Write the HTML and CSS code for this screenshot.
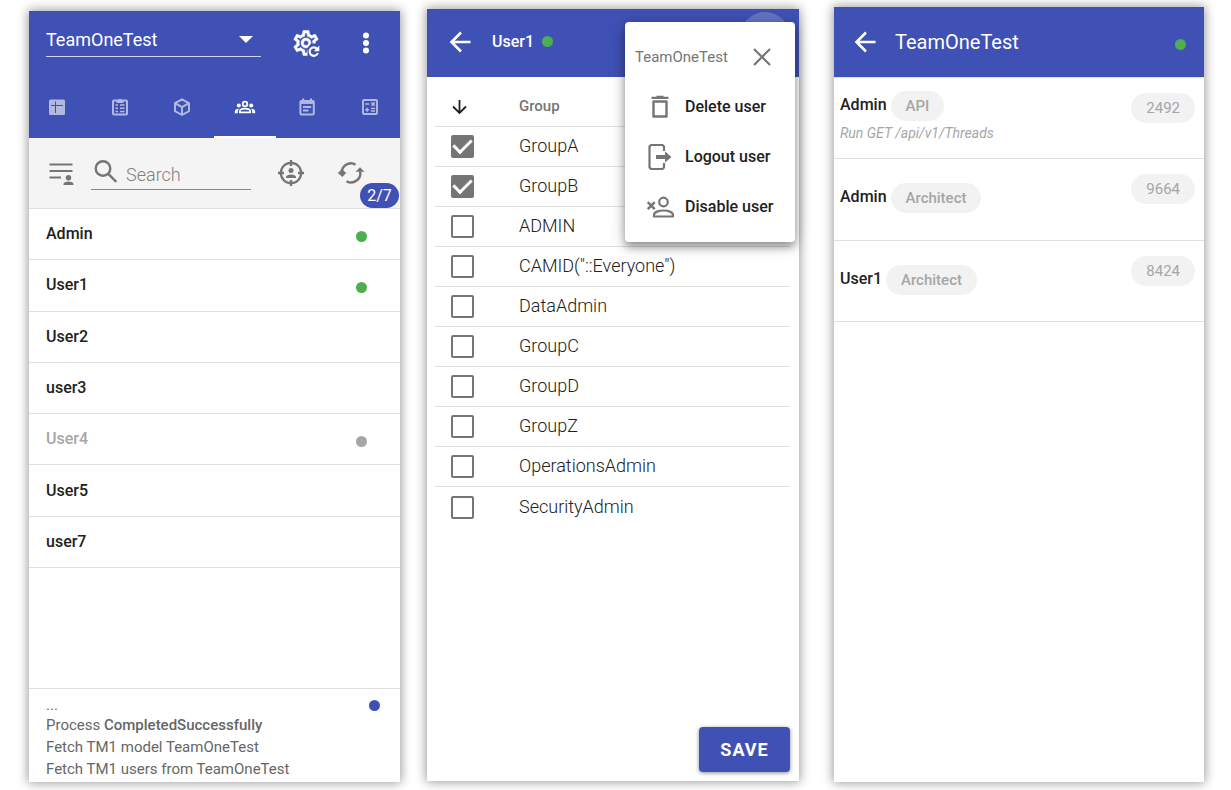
FILE: index.html
```html
<!DOCTYPE html>
<html lang="en">
<head>
<meta charset="utf-8">
<meta name="viewport" content="width=device-width, initial-scale=1">
<title>TeamOneTest</title>
<link rel="stylesheet" href="styles.css">
</head>
<body>
<main class="screens">

  <section class="panel panel-users">
    <header class="bar bar-users">
      <div class="bar-row">
        <div class="select-wrap">
          <select class="model-select" aria-label="Model"><option>TeamOneTest</option></select>
        </div>
        <button class="icon-btn gear-btn" aria-label="Reload settings">
          <svg width="30" height="30" viewBox="0 0 30 30">
            <g transform="scale(1.25)"><path fill="currentColor" stroke="currentColor" stroke-width=".4" fill-rule="evenodd" d="M12,8A4,4 0 0,1 16,12A4,4 0 0,1 12,16A4,4 0 0,1 8,12A4,4 0 0,1 12,8M12,10A2,2 0 0,0 10,12A2,2 0 0,0 12,14A2,2 0 0,0 14,12A2,2 0 0,0 12,10M10,22C9.75,22 9.54,21.82 9.5,21.58L9.13,18.93C8.5,18.68 7.96,18.34 7.44,17.94L4.95,18.95C4.73,19.03 4.46,18.95 4.34,18.73L2.34,15.27C2.21,15.05 2.27,14.78 2.46,14.63L4.57,12.97L4.5,12L4.57,11L2.46,9.37C2.27,9.22 2.21,8.95 2.34,8.73L4.34,5.27C4.46,5.05 4.73,4.96 4.95,5.05L7.44,6.05C7.96,5.66 8.5,5.32 9.13,5.07L9.5,2.42C9.54,2.18 9.75,2 10,2H14C14.25,2 14.46,2.18 14.5,2.42L14.87,5.07C15.5,5.32 16.04,5.66 16.56,6.05L19.05,5.05C19.27,4.96 19.54,5.05 19.66,5.27L21.66,8.73C21.79,8.95 21.73,9.22 21.54,9.37L19.43,11L19.5,12L19.43,13L21.54,14.63L19,19L14,22ZM11.25,4L10.88,6.61C9.68,6.86 8.62,7.5 7.85,8.39L5.44,7.35L4.69,8.65L6.8,10.2C6.4,11.37 6.4,12.64 6.8,13.8L4.68,15.36L5.43,16.66L7.86,15.62C8.63,16.5 9.68,17.14 10.87,17.38L11.24,20H12.76L13.13,17.39C14.32,17.14 15.37,16.5 16.14,15.62L18.57,16.66L19.32,15.36L17.2,13.81C17.6,12.64 17.6,11.37 17.2,10.2L19.31,8.65L18.56,7.35L16.15,8.39C15.38,7.5 14.32,6.86 13.12,6.62L12.75,4Z"/></g>
            <path class="gear-cut" d="M16.500 30V20l3.500-4.500H30V30z"/>
            <path fill="none" stroke="currentColor" stroke-width="2.200" d="M26 20.800A4.200 4.200 0 1 0 26.800 25"/>
            <path fill="currentColor" d="M28.300 17.600v5.600h-5.600z"/>
          </svg>
        </button>
        <button class="icon-btn more-btn" aria-label="More">
          <svg width="24" height="24" viewBox="0 0 24 24" fill="currentColor"><circle cx="12" cy="4.500" r="3"/><circle cx="12" cy="12" r="3"/><circle cx="12" cy="19.500" r="3"/></svg>
        </button>
      </div>
      <nav class="tabs">
        <button class="tab" aria-label="Tables">
          <svg width="20" height="20" viewBox="0 0 20 20"><rect x="2" y="2.500" width="16" height="15.500" rx="1.500" fill="currentColor"/><path class="cut" d="M4 8.500h12M8.500 4.500v11.500"/></svg>
        </button>
        <button class="tab" aria-label="Processes">
          <svg width="20" height="20" viewBox="0 0 20 20" fill="none" stroke="currentColor"><rect x="3" y="3.500" width="14" height="14" rx="1" stroke-width="2"/><path fill="currentColor" stroke="none" d="M6.500 3h1.700a2 2 0 0 1 3.600 0h1.700v3h-7z"/><path stroke-width="1.500" d="M5.500 8h2.500M10 8h4.500M5.500 11.200h2.500M10 11.200h4.500M5.500 14.500h2.500M10 14.500h4.500"/></svg>
        </button>
        <button class="tab" aria-label="Cubes">
          <svg width="20" height="20" viewBox="0 0 20 20" fill="none" stroke="currentColor" stroke-width="2" stroke-linejoin="round"><path d="M10 2.300l7 3.900v7.900l-7 3.900-7-3.900V6.200zM3 6.200l7 4 7-4M10 10.200V18"/></svg>
        </button>
        <button class="tab tab-active" aria-label="Users" aria-current="page">
          <svg width="22" height="20" viewBox="0 0 22 20" fill="none" stroke="currentColor"><circle cx="11" cy="7" r="2.300" stroke-width="1.800"/><path stroke-width="1.700" stroke-linejoin="round" d="M5.800 15.400v-1c0-1.800 2.600-2.700 5.200-2.700s5.200.9 5.200 2.700v1z"/><g fill="currentColor" stroke="none"><circle cx="4.800" cy="8.600" r="2"/><circle cx="17.200" cy="8.600" r="2"/><path d="M.8 16.300v-1.800c0-1.800 1.900-3 4.200-2.800-.8.800-1.200 1.700-1.200 2.800v1.800zM21.200 16.300v-1.800c0-1.800-1.900-3-4.200-2.800.8.800 1.200 1.700 1.200 2.800v1.800z"/></g></svg>
        </button>
        <button class="tab" aria-label="Schedule">
          <svg width="20" height="20" viewBox="0 0 20 20" fill="none" stroke="currentColor"><rect x="3.400" y="4" width="13.400" height="13.500" rx="1" stroke-width="2"/><path stroke-width="2" d="M6.200 1.500v3M14 1.500v3"/><path stroke-width="2.500" d="M3 5.700h14"/><path stroke-width="1.800" d="M6 10h8.200M6 13.500h5.500"/></svg>
        </button>
        <button class="tab" aria-label="Calculations">
          <svg width="20" height="20" viewBox="0 0 20 20" fill="none" stroke="currentColor"><rect x="3" y="3" width="14" height="14" rx="1" stroke-width="1.900"/><path stroke-width="1.500" d="M5.200 7h4M5.200 12.700h4M7.200 10.700v4M11 11.600h4M11 14h4M11.500 5.400l3.200 3.200M14.700 5.400l-3.200 3.200"/></svg>
        </button>
      </nav>
    </header>

    <div class="toolbar">
      <button class="icon-btn list-btn" aria-label="User list">
        <svg width="26" height="26" viewBox="0 0 26 26"><path fill="none" stroke="currentColor" stroke-width="2.200" d="M1.500 4.500h23M1.500 11h23M1.500 17.500h11.500"/><circle cx="20.500" cy="17.800" r="2.700" fill="currentColor"/><path fill="currentColor" d="M15.500 25v-1c0-1.800 2.400-2.600 5-2.600s5 .8 5 2.600v1z"/></svg>
      </button>
      <label class="search">
        <svg width="24" height="24" viewBox="0 0 24 24" fill="none" stroke="currentColor" stroke-width="2.400"><circle cx="9" cy="9.500" r="7.300"/><path d="M14.300 14.800l8 8"/></svg>
        <input class="search-input" type="search" placeholder="Search" aria-label="Search">
      </label>
      <button class="icon-btn target-btn" aria-label="Active users">
        <svg width="26" height="26" viewBox="0 0 26 26"><circle cx="13" cy="13" r="10.200" fill="none" stroke="currentColor" stroke-width="2.200"/><path stroke="currentColor" stroke-width="2.400" d="M13 0v6M13 20v6M0 13h6M20 13h6"/><circle cx="13" cy="10.500" r="2.500" fill="currentColor"/><path fill="currentColor" d="M8 18v-1c0-1.800 2.400-2.600 5-2.600s5 .8 5 2.600v1z"/></svg>
      </button>
      <button class="icon-btn refresh-btn" aria-label="Refresh">
        <svg width="28" height="24" viewBox="0 0 28 24"><path fill="none" stroke="currentColor" stroke-width="2.400" d="M5 13A9 9 0 0 1 18.500 3.600M23 10A9.200 9.200 0 0 1 9.500 20.200"/><path fill="currentColor" d="M.5 12.500l4.500-4.500 4.500 4.500zM18.500 10.700h9L23 6.200zM.5 11.500h9l-4.200 4.500z"/></svg>
        <span class="count">2/7</span>
      </button>
    </div>

    <ul class="users">
      <li class="user"><a href="#">Admin</a><span class="dot dot-on"></span></li>
      <li class="user"><a href="#">User1</a><span class="dot dot-on"></span></li>
      <li class="user"><a href="#">User2</a></li>
      <li class="user"><a href="#">user3</a></li>
      <li class="user user-off"><a href="#">User4</a><span class="dot dot-off"></span></li>
      <li class="user"><a href="#">User5</a></li>
      <li class="user"><a href="#">user7</a></li>
    </ul>

    <footer class="log">
      <div class="log-lines">
        <p class="log-more">...</p>
        <p>Process <strong>CompletedSuccessfully</strong></p>
        <p>Fetch TM1 model TeamOneTest</p>
        <p>Fetch TM1 users from TeamOneTest</p>
      </div>
      <span class="dot dot-info"></span>
    </footer>
  </section>

  <section class="panel panel-groups">
    <header class="bar bar-title">
      <button class="icon-btn" aria-label="Back">
        <svg width="22" height="22" viewBox="0 0 22 22" fill="none" stroke="currentColor" stroke-width="2.600"><path d="M21.500 11H3M12 1.500L2.500 11l9.500 9.500"/></svg>
      </button>
      <h1 class="user-title">User1</h1>
      <span class="dot dot-on"></span>
      <span class="ripple"></span>
    </header>
    <table class="groups">
      <thead>
        <tr><th class="col-check"><button class="icon-btn sort-btn" aria-label="Sort"><svg width="16" height="16" viewBox="0 0 16 16" fill="none" stroke="currentColor" stroke-width="1.800"><path d="M7.500 2v13M1 8.500L7.500 15 14 8.500"/></svg></button></th><th>Group</th></tr>
      </thead>
      <tbody>
        <tr><td><input type="checkbox" class="check" id="g1" checked></td><td><label for="g1">GroupA</label></td></tr>
        <tr><td><input type="checkbox" class="check" id="g2" checked></td><td><label for="g2">GroupB</label></td></tr>
        <tr><td><input type="checkbox" class="check" id="g3"></td><td><label for="g3">ADMIN</label></td></tr>
        <tr><td><input type="checkbox" class="check" id="g4"></td><td><label for="g4">CAMID("::Everyone")</label></td></tr>
        <tr><td><input type="checkbox" class="check" id="g5"></td><td><label for="g5">DataAdmin</label></td></tr>
        <tr><td><input type="checkbox" class="check" id="g6"></td><td><label for="g6">GroupC</label></td></tr>
        <tr><td><input type="checkbox" class="check" id="g7"></td><td><label for="g7">GroupD</label></td></tr>
        <tr><td><input type="checkbox" class="check" id="g8"></td><td><label for="g8">GroupZ</label></td></tr>
        <tr><td><input type="checkbox" class="check" id="g9"></td><td><label for="g9">OperationsAdmin</label></td></tr>
        <tr><td><input type="checkbox" class="check" id="g10"></td><td><label for="g10">SecurityAdmin</label></td></tr>
      </tbody>
    </table>
    <button class="save">SAVE</button>

    <div class="menu">
      <div class="menu-head">
        <span>TeamOneTest</span>
        <button class="icon-btn" aria-label="Close"><svg width="18" height="18" viewBox="0 0 18 18" fill="none" stroke="currentColor" stroke-width="2.200"><path d="M1 1l16 16M17 1L1 17"/></svg></button>
      </div>
      <button class="menu-item">
        <svg width="28" height="28" viewBox="0 0 28 28" fill="none" stroke="currentColor"><path stroke-width="2.400" stroke-linejoin="round" d="M7.500 8.500h13v15h-13z"/><path stroke-width="2.200" d="M5.500 4.800h17M10.500 3.800h7"/></svg>
        Delete user
      </button>
      <button class="menu-item">
        <svg width="28" height="28" viewBox="0 0 28 28"><path fill="none" stroke="currentColor" stroke-width="2.200" stroke-linejoin="round" d="M18 8V3.500L16.500 2H5L3.500 3.500v21L5 26h11.500l1.500-1.500V20"/><path fill="currentColor" d="M10 12h9V8.500l6.500 5.500-6.500 5.500V16h-9z"/></svg>
        Logout user
      </button>
      <button class="menu-item">
        <svg width="28" height="28" viewBox="0 0 28 28" fill="none" stroke="currentColor"><circle cx="17.500" cy="9" r="4.300" stroke-width="2.200"/><path stroke-width="2.200" stroke-linejoin="round" d="M8 23.500V22c0-3 5-4.500 9.500-4.500S27 19 27 22v1.500z"/><path stroke-width="2.400" d="M1.700 9.200l7 7M8.700 9.200l-7 7"/></svg>
        Disable user
      </button>
    </div>
  </section>

  <section class="panel panel-threads">
    <header class="bar bar-title bar-threads">
      <button class="icon-btn" aria-label="Back">
        <svg width="22" height="22" viewBox="0 0 22 22" fill="none" stroke="currentColor" stroke-width="2.600"><path d="M21.500 11H3M12 1.500L2.500 11l9.500 9.500"/></svg>
      </button>
      <h1 class="model-title">TeamOneTest</h1>
      <span class="dot dot-on dot-end"></span>
    </header>
    <ul class="threads">
      <li class="thread">
        <div><span class="thread-name">Admin</span> <span class="chip">API</span><p class="thread-call">Run GET /api/v1/Threads</p></div>
        <span class="chip chip-id">2492</span>
      </li>
      <li class="thread">
        <div><span class="thread-name">Admin</span> <span class="chip">Architect</span></div>
        <span class="chip chip-id">9664</span>
      </li>
      <li class="thread">
        <div><span class="thread-name">User1</span> <span class="chip">Architect</span></div>
        <span class="chip chip-id">8424</span>
      </li>
    </ul>
  </section>

</main>
</body>
</html>
```
FILE: styles.css
```css
* { box-sizing: border-box; }

:root {
  --primary: #3f51b5;
  --text: #212121;
  --muted: #757575;
  --line: #e0e0e0;
}

body {
  margin: 0;
  background: #fff;
  color: var(--text);
  font: 400 16px/20px Roboto, sans-serif;
}

h1, p, ul { margin: 0; padding: 0; font-weight: 400; }
ul { list-style: none; }
button, input, select { font: inherit; color: inherit; }
a { color: inherit; text-decoration: none; }
svg { display: block; flex: none; }

.screens {
  display: grid;
  grid-template-columns: 371fr 372fr 378fr;
  gap: 27px;
  min-height: 100vh;
  padding: 7px 27px 8px 29px;
}

.panel {
  position: relative;
  display: flex;
  flex-direction: column;
  min-width: 0;
  background: #fff;
  box-shadow: 0 0 10px 1px rgba(0, 0, 0, .4);
}
.panel-users { margin-top: 4px; }
.panel-groups { margin-top: 2px; margin-bottom: 1px; }
.panel-threads { margin-left: 8px; }

.bar { background: var(--primary); color: #fff; }

.icon-btn {
  display: flex;
  align-items: center;
  justify-content: center;
  padding: 0;
  border: 0;
  background: none;
  cursor: pointer;
}

.dot { flex: none; width: 11px; height: 11px; border-radius: 50%; }
.dot-on { background: #4caf50; }
.dot-off { background: #a6a6a6; }
.dot-info { background: var(--primary); }

/* Users */
.bar-users { overflow: hidden; }
.bar-row { display: flex; align-items: center; height: 65px; padding: 0 22px 2px 17px; }
.select-wrap { position: relative; flex: 1; padding-bottom: 4px; }
.select-wrap::after {
  content: "";
  position: absolute;
  right: 8px;
  top: 11px;
  border: 7px solid transparent;
  border-top-color: #fff;
  border-bottom: 0;
  pointer-events: none;
}
.model-select {
  display: block;
  width: 100%;
  height: 32px;
  padding: 0;
  border: 0;
  border-bottom: 1px solid #d0d4ee;
  border-radius: 0;
  background: none;
  appearance: none;
  font-size: 18px;
  outline: 0;
}
.gear-btn { margin-left: 30px; }
.gear-cut { fill: var(--primary); }
.more-btn { margin-left: 33px; }

.tabs { display: flex; margin: 0 -1px 0 -3px; }
.tab {
  display: flex;
  flex: 1;
  align-items: center;
  justify-content: center;
  height: 62px;
  padding: 2px 0 0;
  border: 0;
  border-bottom: 2px solid transparent;
  background: none;
  color: #b2b9e1;
}
.tab-active { border-color: #fff; color: #fff; }
.cut { fill: none; stroke: var(--primary); stroke-width: 1; }

.toolbar {
  display: flex;
  align-items: center;
  height: 71px;
  padding: 0 35px 0 19px;
  border-bottom: 1px solid var(--line);
  background: #f4f4f4;
  color: var(--muted);
}
.search {
  display: flex;
  flex: 1;
  gap: 8px;
  min-width: 0;
  height: 31px;
  margin: 3px 27px 0 17px;
  padding-left: 3px;
  border-bottom: 1px solid #8a8a8a;
}
.search-input { width: 100%; min-width: 0; height: 30px; padding: 0; border: 0; background: none; font-size: 18px; font-weight: 300; outline: 0; }
.search-input::placeholder { color: #808080; opacity: 1; }
.refresh-btn { position: relative; margin-left: 33px; }
.count {
  position: absolute;
  left: 23px;
  top: 22px;
  width: 39px;
  border-radius: 13px;
  background: var(--primary);
  color: #fff;
  line-height: 25px;
}

.users { display: grid; grid-auto-rows: 1fr; height: 359px; }
.user {
  display: flex;
  align-items: center;
  justify-content: space-between;
  padding: 0 33px 0 17px;
  border-bottom: 1px solid var(--line);
  font-weight: 500;
}
.user .dot { margin-top: 5px; }
.user-off { color: #a6a6a6; }

.log {
  display: flex;
  justify-content: space-between;
  margin-top: auto;
  padding: 8px 20px 2px 17px;
  border-top: 1px solid var(--line);
  color: #666;
  font-size: 15px;
  line-height: 22px;
}
.log-more { line-height: 17px; }
.log strong { font-weight: 500; }
.log .dot { margin-top: 3px; }

/* Groups */
.bar-title { position: relative; display: flex; align-items: center; height: 68px; padding: 0 18px 2px 22px; overflow: hidden; }
.user-title { margin-left: 21px; font-size: 16px; font-weight: 500; }
.bar-title .user-title + .dot { margin: 0 0 2px 8px; }
.ripple {
  position: absolute;
  right: 9px;
  top: 3px;
  width: 50px;
  height: 50px;
  border-radius: 50%;
  background: rgba(255, 255, 255, .2);
}

.groups { margin: 9px 9px 0 8px; border-collapse: collapse; font-size: 18px; font-weight: 300; }
.groups th, .groups td { height: 40px; padding: 0; border-bottom: 1px solid var(--line); text-align: left; }
.groups th { color: var(--muted); font-size: 15px; font-weight: 500; }
.groups tbody tr:last-child td { height: 42px; border-bottom: 0; }
.col-check { width: 84px; }
.sort-btn { margin-left: 17px; color: #212121; }
.check {
  display: grid;
  place-items: center;
  width: 23px;
  height: 23px;
  margin: 0 0 0 16px;
  border: 2px solid var(--muted);
  border-radius: 2px;
  appearance: none;
}
.check:checked { background: var(--muted); }
.check:checked::after {
  content: "";
  width: 8px;
  height: 15px;
  margin-top: -5px;
  border: solid #fff;
  border-width: 0 3px 3px 0;
  rotate: 45deg;
}

.save {
  align-self: flex-end;
  min-width: 91px;
  height: 45px;
  margin: auto 9px 9px 0;
  padding: 0 16px;
  border: 0;
  border-radius: 4px;
  background: var(--primary);
  box-shadow: 0 1px 4px rgba(0, 0, 0, .45);
  color: #fff;
  font-size: 18px;
  font-weight: 700;
  letter-spacing: 1px;
}

.menu {
  position: absolute;
  top: 13px;
  right: 4px;
  width: 170px;
  padding: 10px 0;
  border-radius: 4px;
  background: #fff;
  box-shadow: 0 5px 8px rgba(0, 0, 0, .35), 0 2px 18px rgba(0, 0, 0, .2);
}
.menu-head {
  display: flex;
  align-items: center;
  justify-content: space-between;
  height: 50px;
  padding: 0 24px 0 10px;
  color: var(--muted);
  font-size: 15px;
}
.menu-item {
  display: flex;
  align-items: center;
  gap: 11px;
  width: 100%;
  height: 50px;
  padding: 0 0 0 21px;
  border: 0;
  background: none;
  font-weight: 500;
  text-align: left;
  white-space: nowrap;
}
.menu-item svg { color: var(--muted); }

/* Threads */
.bar-threads { height: 70px; padding-left: 20px; padding-bottom: 0; }
.model-title { margin-left: 19px; font-size: 20px; }
.dot-end { margin: 4px 0 0 auto; }

.threads { display: grid; grid-auto-rows: 1fr; height: 245px; border-top: 1px solid var(--line); }
.thread {
  display: flex;
  align-items: center;
  justify-content: space-between;
  padding: 0 9px 2px 6px;
  border-bottom: 1px solid var(--line);
}
.thread-name { font-weight: 500; }
.chip {
  display: inline-block;
  padding: 0 15px;
  border-radius: 15px;
  background: #f2f2f2;
  color: #a6a6a6;
  font-size: 15px;
  font-weight: 500;
  line-height: 30px;
  vertical-align: middle;
}
.chip-id { align-self: flex-start; margin-top: 15px; font-weight: 400; }
.thread-call { padding-top: 2px; color: #a6a6a6; font-size: 14px; font-style: italic; }
```
